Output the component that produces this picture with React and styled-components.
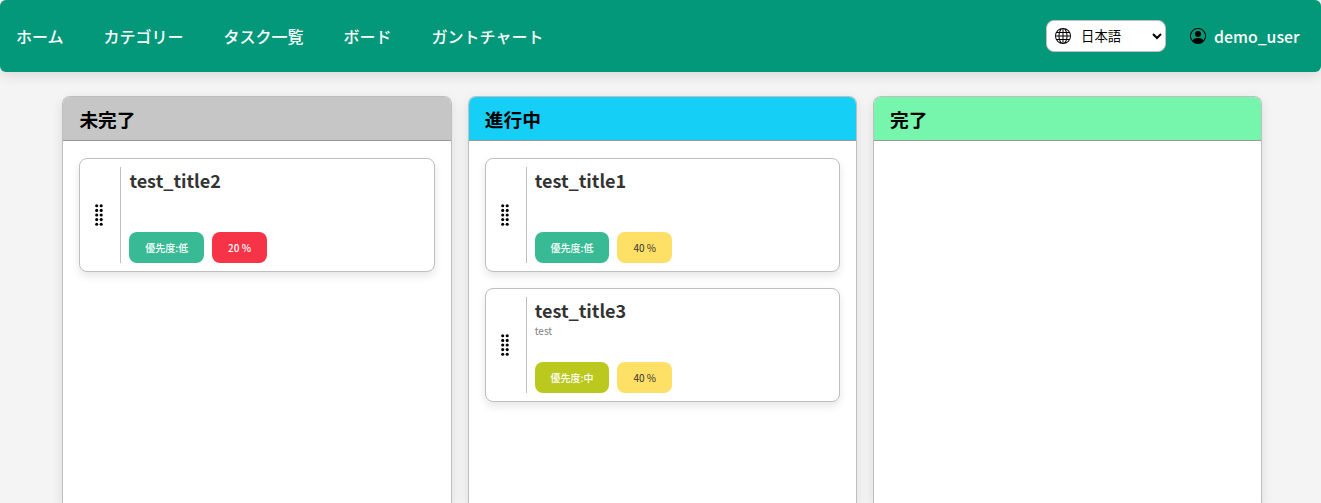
import React from "react";
import styled, { createGlobalStyle } from "styled-components";
import { BsGlobe, BsPersonCircle } from "react-icons/bs";

const GlobalStyle = createGlobalStyle`
  * { box-sizing: border-box; }
  body {
    margin: 0;
    background: #f4f4f4;
    color: #333;
    font-family: "Noto Sans CJK JP", "Noto Sans", sans-serif;
  }
`;

const Page = styled.div`
  display: flex;
  flex-direction: column;
  height: 100vh;
`;

const Header = styled.header`
  display: flex;
  align-items: center;
  justify-content: space-between;
  flex: none;
  height: 72px;
  padding: 0 21.5px 0 16px;
  border-radius: 6px;
  background: #029879;
  box-shadow: 0 4px 12px rgba(0, 0, 0, 0.1);
`;

const Nav = styled.nav`
  display: flex;
  gap: 40px;
`;

const NavLink = styled.a`
  color: #fff;
  font-size: 16px;
  font-weight: 500;
  line-height: 24px;
  padding-bottom: 1px;
`;

const HeaderSide = styled.div`
  display: flex;
  align-items: center;
  gap: 24px;
`;

const LanguagePicker = styled.label`
  display: flex;
  align-items: center;
  width: 120px;
  height: 32px;
  padding-left: 8px;
  border: 1px solid #bfbfbf;
  border-radius: 8px;
  background: #fff;
  color: #000;
`;

const LanguageSelect = styled.select`
  flex: 1;
  height: 30px;
  margin-left: 6px;
  padding-bottom: 2px;
  border: 0;
  background: transparent;
  color: #000;
  font-family: inherit;
  font-size: 13.333px;
`;

const User = styled.div`
  display: flex;
  align-items: center;
  gap: 8px;
  color: #000;
`;

const UserName = styled.span`
  color: #fff;
  font-size: 15.85px;
  font-weight: 500;
  line-height: 24px;
  padding-top: 2px;
`;

const Board = styled.main`
  display: grid;
  grid-template-columns: repeat(3, 1fr);
  gap: 16px;
  flex: 1;
  width: 1200px;
  min-height: 0;
  margin: 24px 0 0 62.4px;
`;

const Column = styled.section`
  overflow: hidden;
  border: 1px solid #bfbfbf;
  border-bottom: 0;
  border-radius: 8px 8px 0 0;
  background: #fff;
  box-shadow: 0 4px 12px rgba(0, 0, 0, 0.1);
`;

const ColumnTitle = styled.h3`
  margin: 0;
  height: 44px;
  padding: 8px 16px;
  border-bottom: 1px solid #999;
  background: ${({ $color }) => $color};
  color: #000;
  font-size: 18.72px;
  font-weight: 700;
  line-height: 28px;
`;

const CardList = styled.div`
  display: flex;
  flex-direction: column;
  gap: 16px;
  padding: 17px 16px 16px;
`;

const Card = styled.article`
  display: flex;
  height: 114px;
  padding: 8px;
  border: 1px solid #bfbfbf;
  border-radius: 8px;
  background: #fff;
  box-shadow: 0 4px 8px rgba(0, 0, 0, 0.1);
`;

const Handle = styled.div`
  display: flex;
  align-items: center;
  width: 33px;
  padding-left: 7px;
  border-right: 1px solid #bfbfbf;
`;

const CardBody = styled.div`
  display: flex;
  flex-direction: column;
  flex: 1;
  padding-left: 8px;
`;

const CardTitle = styled.h4`
  margin: 0;
  font-size: 18.05px;
  font-weight: 700;
  line-height: 26px;
`;

const Description = styled.p`
  margin: 0;
  color: #808080;
  font-size: 10px;
  line-height: 15px;
`;

const Badges = styled.div`
  display: flex;
  gap: 8px;
  margin-top: auto;
`;

const Badge = styled.span`
  height: 31px;
  padding: 8px 15.8px;
  border-radius: 8px;
  background: ${({ $bg }) => $bg};
  color: ${({ $fg }) => $fg || "#fff"};
  font-size: 10px;
  font-weight: 500;
  line-height: 15px;
  white-space: nowrap;
`;

const ProgressBadge = styled(Badge)`
  padding: 8px 16.1px;
  font-weight: ${({ $weight }) => $weight};
`;

const navItems = ["ホーム", "カテゴリー", "タスク一覧", "ボード", "ガントチャート"];

const priorities = { 低: "#38bb95", 中: "#bbc81e" };

const columns = [
  { title: "未完了", color: "#c6c6c6", tasks: [{ title: "test_title2", priority: "低", progress: 20 }] },
  {
    title: "進行中",
    color: "#16cff6",
    tasks: [
      { title: "test_title1", priority: "低", progress: 40 },
      { title: "test_title3", text: "test", priority: "中", progress: 40 },
    ],
  },
  { title: "完了", color: "#76f5ac", tasks: [] },
];

function GripDots() {
  return (
    <svg width="8" height="22" viewBox="0 0 8 22" fill="#000">
      {[1.8, 6.4, 11, 15.6, 20.2].map((y) => (
        <React.Fragment key={y}>
          <circle cx="1.7" cy={y} r="1.55" />
          <circle cx="6.2" cy={y} r="1.55" />
        </React.Fragment>
      ))}
    </svg>
  );
}

function TaskCard({ task }) {
  const low = task.progress < 30;
  return (
    <Card>
      <Handle>
        <GripDots />
      </Handle>
      <CardBody>
        <CardTitle>{task.title}</CardTitle>
        {task.text && <Description>{task.text}</Description>}
        <Badges>
          <Badge $bg={priorities[task.priority]}>優先度:{task.priority}</Badge>
          <ProgressBadge $bg={low ? "#f63347" : "#ffe066"} $fg={low ? "#fff" : "#333"} $weight={low ? 500 : 400}>
            {`${task.progress} %`}
          </ProgressBadge>
        </Badges>
      </CardBody>
    </Card>
  );
}

export default function App() {
  return (
    <>
      <GlobalStyle />
      <Page>
        <Header>
          <Nav>
            {navItems.map((item) => (
              <NavLink key={item}>{item}</NavLink>
            ))}
          </Nav>
          <HeaderSide>
            <LanguagePicker>
              <BsGlobe size={16} />
              <LanguageSelect>
                <option>日本語</option>
              </LanguageSelect>
            </LanguagePicker>
            <User>
              <BsPersonCircle size={16} />
              <UserName>demo_user</UserName>
            </User>
          </HeaderSide>
        </Header>
        <Board>
          {columns.map((column) => (
            <Column key={column.title}>
              <ColumnTitle $color={column.color}>{column.title}</ColumnTitle>
              <CardList>
                {column.tasks.map((task) => (
                  <TaskCard key={task.title} task={task} />
                ))}
              </CardList>
            </Column>
          ))}
        </Board>
      </Page>
    </>
  );
}
